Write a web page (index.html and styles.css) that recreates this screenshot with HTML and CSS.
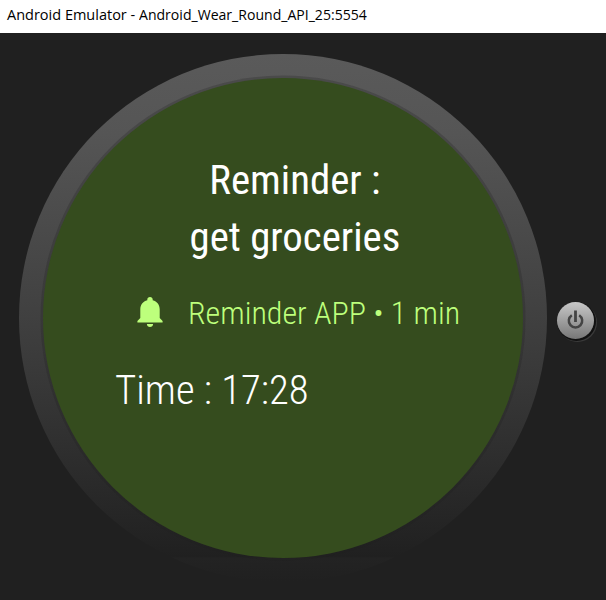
FILE: index.html
```html
<!DOCTYPE html>
<html lang="en">
<head>
<meta charset="utf-8">
<title>Android Emulator</title>
<link rel="stylesheet" href="styles.css">
</head>
<body>
<header class="titlebar">Android Emulator - <span class="avd-name">Android_Wear_Round_API_25:5554</span></header>
<main class="device">
  <section class="bezel">
    <div class="face">
      <h1 class="heading"><span>Reminder :</span><span>get groceries</span></h1>
      <div class="source">
        <svg class="bell" viewBox="0 0 26 32"><path d="M13 1c1.600 0 2.700 1.100 2.700 2.600v.6c4.400 1.100 7 4.700 7 9.200v8.600l2.900 3v1.600H.4V25l2.900-3v-8.600c0-4.500 2.600-8.100 7-9.200v-.6C10.300 2.100 11.400 1 13 1zM9.900 28h6.200c0 1.700-1.400 3-3.100 3s-3.100-1.300-3.100-3z" fill="#bdff7c"/></svg>
        <span class="source-text">Reminder APP • 1 min</span>
      </div>
      <p class="time">Time : 17:28</p>
    </div>
  </section>
  <button class="power" aria-label="Power">
    <svg class="power-icon" viewBox="0 0 18 20" fill="none" stroke="#444"><path d="M5.300 5.200a6.700 6.700 0 1 0 7.400 0" stroke-width="2.500"/><path d="M9 .5v11.500" stroke-width="2.800"/></svg>
  </button>
</main>
</body>
</html>
```
FILE: styles.css
```css
* { box-sizing: border-box; }
body { margin: 0; width: 606px; height: 600px; overflow: hidden; background: #202020; font-family: Roboto, sans-serif; }
.titlebar { height: 33px; padding-left: 7px; background: #fff; color: #000; font: 14.5px/30px "Open Sans", sans-serif; white-space: nowrap; }
.avd-name { display: inline-block; transform: scaleX(.97); transform-origin: left; }
.device { display: flex; height: 567px; padding: 21px 0 0 19px; background: #202020; }
.bezel { flex: none; width: 528px; height: 528px; padding: 24px; border-radius: 50%; background: linear-gradient(#5a5a5a 0%, #555 15%, #404040 50%, #303030 73%, #202020 95.300%, #232323 95.400%, #202020 100%); }
.face { width: 480px; height: 480px; padding-top: 74px; border-radius: 50%; background: #354c1e; box-shadow: 0 0 0 2.500px rgba(32, 32, 32, .25); color: #fff; white-space: nowrap; }
.heading { display: flex; flex-direction: column; align-items: center; margin: 0; padding-left: 24px; font-size: 41px; line-height: 57px; font-weight: 400; font-stretch: 75%; transform: scaleX(.995); }
.source { display: flex; align-items: center; height: 48px; margin-top: 22px; padding-left: 93.500px; color: #bdff7c; font-size: 32px; font-weight: 300; font-stretch: 75%; }
.source-text { position: relative; top: 1px; }
.bell { width: 26px; height: 32px; margin-right: 25.500px; }
.time { margin: 26px 0 0 72px; font-size: 41px; line-height: 57px; font-weight: 300; font-stretch: 75%; transform: scaleX(.994); transform-origin: left; }
.power { display: grid; place-items: center; width: 37px; height: 37px; margin: 248px 0 0 10px; padding: 0; border: 0; border-radius: 50%; background: linear-gradient(#c8c8c8, #777); box-shadow: 1px 1px 0 1px #111, 2px 2px 0 1px #3a3a3a; }
.power-icon { width: 18px; height: 20px; transform: translate(-.5px, -1px); }
```
